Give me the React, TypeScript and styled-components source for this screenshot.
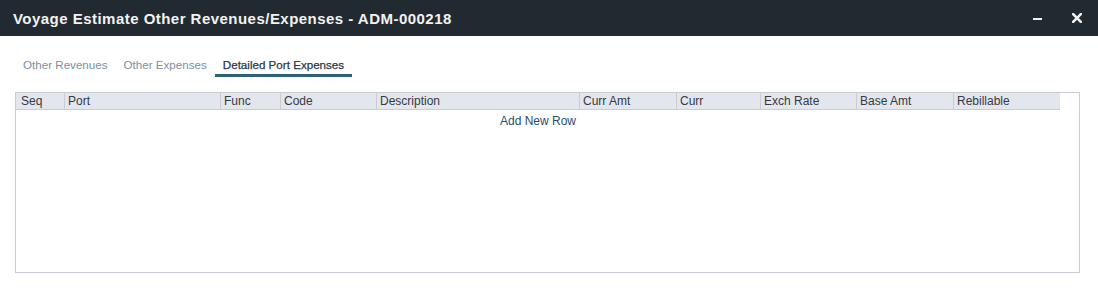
import React from "react";
import styled, { createGlobalStyle } from "styled-components";

const GlobalStyle = createGlobalStyle`
  html, body { margin: 0; padding: 0; background: #ffffff; }
  body { font-family: "Liberation Sans", Arial, sans-serif; }
  * { box-sizing: border-box; }
`;

const Page = styled.div`
  width: 1098px;
  height: 298px;
  background: #fff;
  display: flex;
  flex-direction: column;
`;

const TitleBar = styled.div`
  height: 36px;
  background: #222a31;
  display: flex;
  align-items: center;
  padding: 0 13px;
`;

const Title = styled.div`
  flex: 1;
  color: #f2f2f2;
  font-size: 15px;
  font-weight: bold;
  letter-spacing: 0.47px;
  line-height: 18px;
  padding-top: 1px;
`;

const Controls = styled.div`
  display: flex;
  align-items: center;
  gap: 30px;
  padding-right: 3px;
`;

const IconButton = styled.button`
  background: none;
  border: none;
  padding: 0;
  width: 10px;
  height: 12px;
  display: flex;
  align-items: center;
  justify-content: center;
  cursor: pointer;
`;

const Body = styled.div`
  padding: 22px 18px 0 15px;
  display: flex;
  flex-direction: column;
`;

const Tabs = styled.div`
  display: flex;
  align-items: flex-end;
`;

const Tab = styled.div<{ $active?: boolean }>`
  padding: 0 8px 2px;
  font-size: 11.62px;
  line-height: 14px;
  color: ${(p) => (p.$active ? "#26394d" : "#7990a4")};
  border-bottom: 3px solid ${(p) => (p.$active ? "#2e5f79" : "transparent")};
  -webkit-text-stroke: ${(p) => (p.$active ? "0.25px #26394d" : "0")};
  cursor: pointer;
  white-space: nowrap;
`;

const GridFrame = styled.div`
  margin-top: 15px;
  width: 1065px;
  height: 181px;
  border: 1px solid #c9ccd6;
  display: flex;
  flex-direction: column;
`;

const columns = [48, 156, 60, 96, 203, 97, 84, 96, 97, 107];

const HeaderRow = styled.div`
  display: grid;
  grid-template-columns: ${columns.map((c) => `${c}px`).join(" ")};
  width: ${columns.reduce((a, b) => a + b, 0)}px;
  background: #e4e6ee;
  border-bottom: 1px solid #c9ccd6;
  height: 17px;
`;

const HeaderCell = styled.div<{ $first?: boolean }>`
  font-size: 12px;
  line-height: 16px;
  color: #333a44;
  padding-left: ${(p) => (p.$first ? "5px" : "3px")};
  border-left: ${(p) => (p.$first ? "none" : "1px solid #c9ccd6")};
  white-space: nowrap;
  overflow: hidden;
`;

const AddRow = styled.div`
  width: ${columns.reduce((a, b) => a + b, 0)}px;
  text-align: center;
  font-size: 12px;
  line-height: 22px;
  color: #2b4c6b;
  cursor: pointer;
`;

const headers = [
  "Seq",
  "Port",
  "Func",
  "Code",
  "Description",
  "Curr Amt",
  "Curr",
  "Exch Rate",
  "Base Amt",
  "Rebillable",
];

export default function App() {
  return (
    <>
      <GlobalStyle />
      <Page>
        <TitleBar>
          <Title>Voyage Estimate Other Revenues/Expenses - ADM-000218</Title>
          <Controls>
            <IconButton aria-label="minimize">
              <svg width="9" height="12" viewBox="0 0 9 12">
                <rect x="0" y="6" width="9" height="2" fill="#f2f2f2" />
              </svg>
            </IconButton>
            <IconButton aria-label="close">
              <svg width="10" height="10" viewBox="0 0 10 10">
                <path
                  d="M1.2 1.2 L8.8 8.8 M8.8 1.2 L1.2 8.8"
                  stroke="#f2f2f2"
                  strokeWidth="2.6"
                  strokeLinecap="square"
                />
              </svg>
            </IconButton>
          </Controls>
        </TitleBar>
        <Body>
          <Tabs>
            <Tab>Other Revenues</Tab>
            <Tab>Other Expenses</Tab>
            <Tab $active>Detailed Port Expenses</Tab>
          </Tabs>
          <GridFrame>
            <HeaderRow>
              {headers.map((h, i) => (
                <HeaderCell key={h} $first={i === 0}>
                  {h}
                </HeaderCell>
              ))}
            </HeaderRow>
            <AddRow>Add New Row</AddRow>
          </GridFrame>
        </Body>
      </Page>
    </>
  );
}
